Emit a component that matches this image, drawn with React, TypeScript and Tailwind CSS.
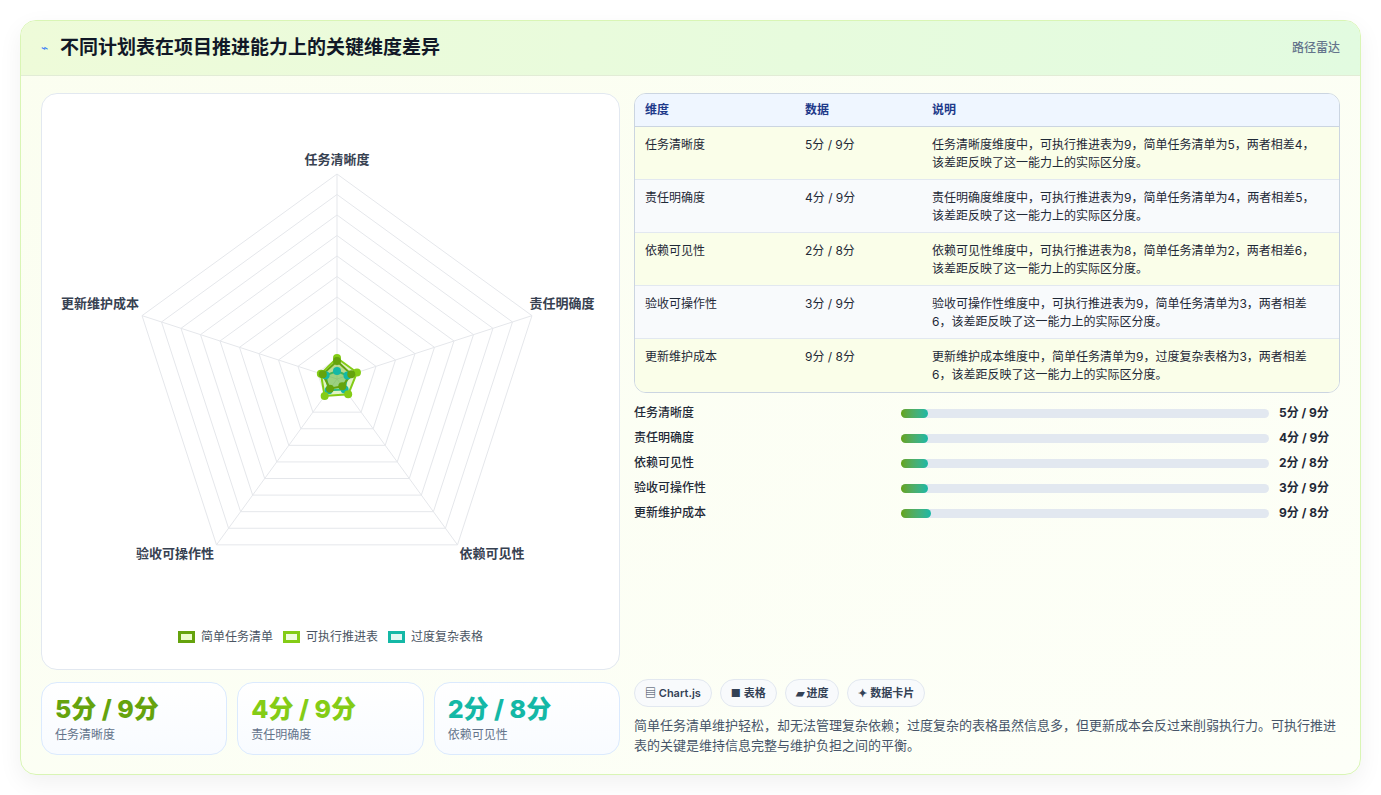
import React from "react";

const dims = ["任务清晰度", "责任明确度", "依赖可见性", "验收可操作性", "更新维护成本"];
const vals = ["5分 / 9分", "4分 / 9分", "2分 / 8分", "3分 / 9分", "9分 / 8分"];
const descs = [
  "任务清晰度维度中，可执行推进表为9，简单任务清单为5，两者相差4，该差距反映了这一能力上的实际区分度。",
  "责任明确度维度中，可执行推进表为9，简单任务清单为4，两者相差5，该差距反映了这一能力上的实际区分度。",
  "依赖可见性维度中，可执行推进表为8，简单任务清单为2，两者相差6，该差距反映了这一能力上的实际区分度。",
  "验收可操作性维度中，可执行推进表为9，简单任务清单为3，两者相差6，该差距反映了这一能力上的实际区分度。",
  "更新维护成本维度中，简单任务清单为9，过度复杂表格为3，两者相差6，该差距反映了这一能力上的实际区分度。",
];

function pt(cx: number, cy: number, r: number, i: number) {
  const a = -Math.PI / 2 + (i * 2 * Math.PI) / 5;
  return [cx + r * Math.cos(a), cy + r * Math.sin(a)];
}
function poly(cx: number, cy: number, rs: number[]) {
  return rs.map((r, i) => pt(cx, cy, r, i).join(",")).join(" ");
}

function Radar() {
  const cx = 295, cy = 285, R = 205;
  const rings = Array.from({ length: 10 }, (_, k) => (R * (k + 1)) / 10);
  const s1 = [18, 15, 9, 12, 15];
  const s2 = [21, 21, 19, 21, 17];
  const s3 = [8, 11, 13, 14, 12];
  return (
    <svg width="579" height="490" className="block">
      {rings.map((r, k) => (
        <polygon key={k} points={poly(cx, cy, [r, r, r, r, r])} fill="none" stroke="#e5e7eb" strokeWidth="1" />
      ))}
      {[0, 1, 2, 3, 4].map((i) => {
        const [x, y] = pt(cx, cy, R, i);
        return <line key={i} x1={cx} y1={cy} x2={x} y2={y} stroke="#e5e7eb" />;
      })}
      <polygon points={poly(cx, cy, s3)} fill="rgba(20,184,166,0.25)" stroke="#14b8a6" strokeWidth="2" />
      <polygon points={poly(cx, cy, s2)} fill="rgba(132,204,22,0.25)" stroke="#84cc16" strokeWidth="2" />
      <polygon points={poly(cx, cy, s1)} fill="rgba(101,163,13,0.3)" stroke="#65a30d" strokeWidth="2" />
      {[s3, s2, s1].map((s, j) =>
        s.map((r, i) => {
          const [x, y] = pt(cx, cy, r, i);
          return <circle key={j + "-" + i} cx={x} cy={y} r="4" fill={["#14b8a6", "#84cc16", "#65a30d"][j]} />;
        })
      )}
      <g fontSize="13" fill="#374151" fontWeight="600" fontFamily="'Noto Sans CJK SC', sans-serif">
        <text x={cx} y={70} textAnchor="middle">任务清晰度</text>
        <text x={520} y={214} textAnchor="middle">责任明确度</text>
        <text x={450} y={464} textAnchor="middle">依赖可见性</text>
        <text x={133} y={464} textAnchor="middle">验收可操作性</text>
        <text x={58} y={214} textAnchor="middle">更新维护成本</text>
      </g>
    </svg>
  );
}

export default function App() {
  return (
    <div className="w-[1381px] h-[795px] bg-white p-5 text-[#1f2937]" style={{ fontFamily: "Inter, 'Noto Sans CJK SC', sans-serif" }}>
      <div className="h-[755px] rounded-2xl border border-[#d9f5b5] overflow-hidden flex flex-col bg-gradient-to-br from-[#fbfef0] to-[#fdfff8] shadow-[0_8px_24px_rgba(0,0,0,0.06)]">
        <div className="h-[55px] shrink-0 flex items-center justify-between px-5 bg-gradient-to-r from-[#eefbd9] to-[#e2fbe0] border-b border-[#e2ecd6]">
          <div className="flex items-center gap-3">
            <span className="text-[#3b82f6] text-[12px]">⌁</span>
            <span className="text-[19px] font-bold text-[#111827]">不同计划表在项目推进能力上的关键维度差异</span>
          </div>
          <span className="text-[12px] text-[#64748b] font-medium">路径雷达</span>
        </div>
        <div className="flex-1 flex gap-[14px] px-5 pt-[17px] pb-[19px]">
          <div className="w-[579px] flex flex-col gap-[12px]">
            <div className="h-[577px] bg-white rounded-2xl border border-[#e2e8f0] flex flex-col">
              <div className="pt-[0px]"><Radar /></div>
              <div className="flex justify-center gap-[10px] text-[12px] text-[#4b5563] mt-[44px]">
                <span className="flex items-center gap-[6px]"><span className="w-[17px] h-[12px] border-[3px] border-[#65a30d] bg-[#ecfccb]" />简单任务清单</span>
                <span className="flex items-center gap-[6px]"><span className="w-[17px] h-[12px] border-[3px] border-[#84cc16] bg-[#f0fde0]" />可执行推进表</span>
                <span className="flex items-center gap-[6px]"><span className="w-[17px] h-[12px] border-[3px] border-[#14b8a6] bg-[#e0f7f2]" />过度复杂表格</span>
              </div>
            </div>
            <div className="flex gap-[10px]">
              {[
                ["5分 / 9分", "任务清晰度", "text-[#65a30d]"],
                ["4分 / 9分", "责任明确度", "text-[#84cc16]"],
                ["2分 / 8分", "依赖可见性", "text-[#14b8a6]"],
              ].map(([v, l, c]) => (
                <div key={l} className="flex-1 h-[73px] rounded-2xl border border-[#dbeafe] bg-gradient-to-b from-white to-[#f8fbff] px-[13px] pt-[10px]">
                  <div className={"text-[25px] font-extrabold leading-[32px] " + c}>{v}</div>
                  <div className="text-[12px] text-[#64748b] mt-[1px]">{l}</div>
                </div>
              ))}
            </div>
          </div>
          <div className="flex-1 flex flex-col">
            <div className="rounded-xl border border-[#cbd5e1] overflow-hidden text-[12px]">
              <div className="h-[33px] bg-[#eff6ff] flex items-center font-semibold text-[#1e3a8a] border-b border-[#cbd5e1]">
                <div className="w-[170px] pl-[10px]">维度</div>
                <div className="w-[127px]">数据</div>
                <div className="flex-1">说明</div>
              </div>
              {dims.map((d, i) => (
                <div key={d} className={"h-[53px] flex items-start pt-[9px] text-[#1f2937] " + (i % 2 === 0 ? "bg-[#fafee9]" : "bg-[#f8fafc]") + (i < 4 ? " border-b border-[#e2e8f0]" : "")}>
                  <div className="w-[170px] pl-[10px] leading-[18px]">{d}</div>
                  <div className="w-[127px] leading-[18px]">{vals[i]}</div>
                  <div className="flex-1 pr-[20px] leading-[18px]">{descs[i]}</div>
                </div>
              ))}
            </div>
            <div className="mt-[11px] flex flex-col gap-[7px]">
              {dims.map((d, i) => (
                <div key={d} className="h-[18px] flex items-center text-[12px] text-[#1f2937] font-medium">
                  <div className="w-[267px]">{d}</div>
                  <div className="w-[368px] h-[9px] rounded-full bg-[#e2e8f0]">
                    <div className="h-full rounded-full bg-gradient-to-r from-[#65a30d] to-[#14b8a6]" style={{ width: i === 4 ? 30 : 27 }} />
                  </div>
                  <div className="ml-[10px] font-bold">{vals[i]}</div>
                </div>
              ))}
            </div>
            <div className="flex-1" />
            <div className="flex gap-[8px] text-[11px] font-semibold text-[#334155]">
              {["▤ Chart.js", "■ 表格", "▰ 进度", "✦ 数据卡片"].map((c) => (
                <span key={c} className="h-[28px] px-[10px] flex items-center rounded-full border border-[#e2e8f0] bg-[#f8fafc]">{c}</span>
              ))}
            </div>
            <p className="mt-[8px] text-[13px] leading-[20px] text-[#475569]">
              简单任务清单维护轻松，却无法管理复杂依赖；过度复杂的表格虽然信息多，但更新成本会反过来削弱执行力。可执行推进表的关键是维持信息完整与维护负担之间的平衡。
            </p>
          </div>
        </div>
      </div>
    </div>
  );
}
